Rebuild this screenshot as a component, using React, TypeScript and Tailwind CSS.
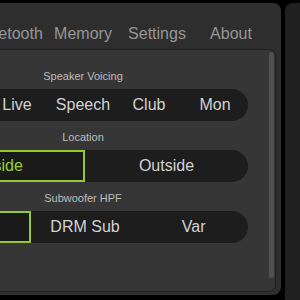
import React from "react";

type SegProps = { label: string; items: string[]; selected: number };

const Segment: React.FC<SegProps> = ({ label, items, selected }) => {
  return (
    <div className="flex flex-col items-center">
      <div className="h-[14px] leading-[14px] text-[11px] text-[#bdbdbd] mb-[6px]">{label}</div>
      <div className="w-[330px] h-[32px] shrink-0 rounded-full bg-[#1d1d1d] flex overflow-hidden">
        {items.map((item, i) => (
          <div
            key={item}
            className={
              i === selected
                ? "flex-1 flex items-center justify-center text-[16px] text-[#9ccf33] border-2 border-[#94c930] bg-[#1a1a1a]"
                : "flex-1 flex items-center justify-center text-[16px] text-[#d2d2d2]"
            }
          >
            {item}
          </div>
        ))}
      </div>
    </div>
  );
};

const App: React.FC = () => {
  const tabs = ["Mixer", "Bluetooth", "Memory", "Settings", "About"];
  return (
    <div
      className="w-[300px] h-[300px] bg-black overflow-hidden flex gap-[4px] pt-[3px]"
      style={{ fontFamily: '"Liberation Sans", Arial, sans-serif' }}
    >
      <div className="ml-[-115px] w-[396px] h-[292px] shrink-0 bg-[#2e2e2e] rounded-[8px] flex flex-col px-[5px]">
        <div className="h-[46px] shrink-0 flex justify-center items-end pb-[5px]">
          {tabs.map((t) => (
            <div key={t} className="w-[74px] text-center text-[16px] leading-[20px] text-[#969696]">
              {t}
            </div>
          ))}
        </div>
        <div className="relative h-[243px] shrink-0 bg-[#363636] border border-[#1f1f1f] rounded-[7px] pt-[19px] flex flex-col gap-[9px]">
          <Segment label="Speaker Voicing" items={["Music", "Live", "Speech", "Club", "Mon"]} selected={-1} />
          <Segment label="Location" items={["Inside", "Outside"]} selected={0} />
          <Segment label="Subwoofer HPF" items={["Off", "DRM Sub", "Var"]} selected={0} />
          <div className="absolute right-[1px] top-[2px] w-[5px] h-[226px] rounded-full bg-[#505050]" />
        </div>
      </div>
      <div className="flex-1 h-[297px] bg-[#202020] rounded-tl-[8px]" />
    </div>
  );
};

export default App;
